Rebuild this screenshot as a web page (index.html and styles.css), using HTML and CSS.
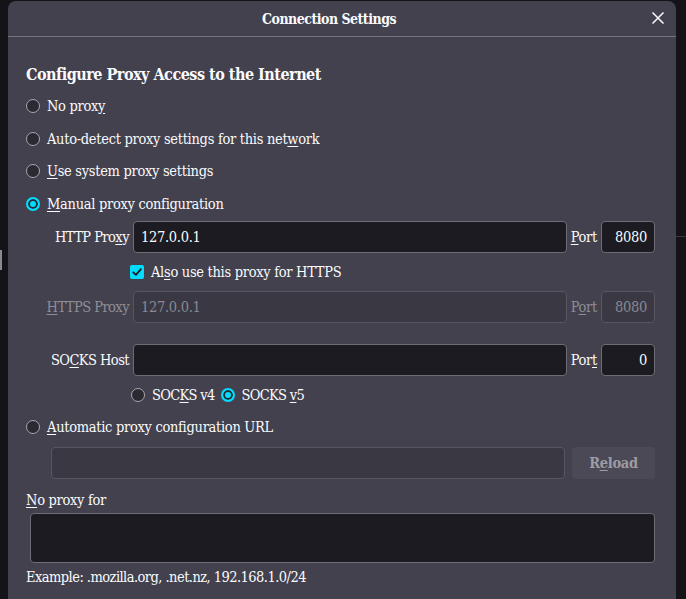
FILE: index.html
```html
<!DOCTYPE html>
<html lang="en">
<head>
<meta charset="utf-8">
<title>Connection Settings</title>
<link rel="stylesheet" href="styles.css">
</head>
<body>
<div class="page">
  <div class="page-line"></div>
  <div class="page-mark"></div>
</div>
<div class="dialog">
  <div class="titlebar">
    <span class="title">Connection Settings</span>
    <button class="close" aria-label="Close">
      <svg width="14" height="14" viewBox="0 0 14 14"><path d="M1.5 1.5 L12.5 12.5 M12.5 1.5 L1.5 12.5" stroke="#fbfbfe" stroke-width="1.5" fill="none"/></svg>
    </button>
  </div>
  <div class="content">
    <h2 class="heading">Configure Proxy Access to the Internet</h2>
    <label class="opt"><span class="radio"></span><span>No prox<u>y</u></span></label>
    <label class="opt"><span class="radio"></span><span>Auto-detect proxy settings for this net<u>w</u>ork</span></label>
    <label class="opt"><span class="radio"></span><span><u>U</u>se system proxy settings</span></label>
    <label class="opt"><span class="radio on"></span><span><u>M</u>anual proxy configuration</span></label>

    <div class="prow first">
      <span class="plabel">HTTP Pro<u>x</u>y</span>
      <div class="field">127.0.0.1</div>
      <span class="portlabel"><u>P</u>ort</span>
      <div class="field port">8080</div>
    </div>
    <label class="check-row"><span class="checkbox"><svg width="14" height="14" viewBox="0 0 14 14"><path d="M3.3 7.3 L5.9 9.9 L10.9 4.2" stroke="#1c1b22" stroke-width="1.8" fill="none" stroke-linecap="round" stroke-linejoin="round"/></svg></span><span>Al<u>s</u>o use this proxy for HTTPS</span></label>
    <div class="prow dis">
      <span class="plabel"><u>H</u>TTPS Proxy</span>
      <div class="field off">127.0.0.1</div>
      <span class="portlabel">P<u>o</u>rt</span>
      <div class="field port off">8080</div>
    </div>
    <div class="prow socks">
      <span class="plabel">SO<u>C</u>KS Host</span>
      <div class="field"></div>
      <span class="portlabel">Por<u>t</u></span>
      <div class="field port">0</div>
    </div>
    <div class="ver-row">
      <label class="mini"><span class="radio"></span><span>SOC<u>K</u>S v4</span></label>
      <label class="mini"><span class="radio on"></span><span>SOCKS <u>v</u>5</span></label>
    </div>
    <label class="opt auto"><span class="radio"></span><span><u>A</u>utomatic proxy configuration URL</span></label>
    <div class="url-row">
      <div class="field off url"></div>
      <button class="reload">R<u>e</u>load</button>
    </div>
    <div class="noproxy"><u>N</u>o proxy for</div>
    <div class="textarea"></div>
    <div class="example">Example: .mozilla.org, .net.nz, 192.168.1.0/24</div>
  </div>
</div>
</body>
</html>
```

FILE: styles.css
```css
* { box-sizing: border-box; }
html, body { margin: 0; padding: 0; }
body {
  width: 686px;
  height: 599px;
  overflow: hidden;
  background: #141318;
  font-family: "DejaVu Serif Condensed", "DejaVu Serif", "Liberation Serif", serif;
  font-stretch: condensed;
  color: #fbfbfe;
  font-size: 14.5px;
  letter-spacing: -0.3px;
  position: relative;
}
u { text-decoration: underline; text-underline-offset: 2px; }

.page { position: absolute; inset: 0; }
.page-line { position: absolute; left: 676px; top: 236px; width: 10px; height: 1px; background: #3a3940; }
.page-mark { position: absolute; left: 0; top: 250px; width: 2px; height: 20px; background: #8a8990; }

.dialog {
  position: absolute;
  left: 8px;
  top: 1px;
  width: 668px;
  height: 620px;
  background: #42414d;
  border-radius: 8px;
}
.titlebar {
  height: 36px;
  border-bottom: 1px solid #75747d;
  display: flex;
  align-items: center;
  justify-content: center;
  position: relative;
  padding-right: 26px;
}
.title { font-weight: bold; font-size: 14px; letter-spacing: -0.5px; }
.close {
  position: absolute;
  right: 11px;
  top: 10px;
  width: 14px;
  height: 14px;
  padding: 0;
  border: 0;
  background: none;
  display: flex;
}

.content { padding: 0 21px 0 18px; }
.heading {
  margin: 26px 0 0;
  font-size: 16px;
  letter-spacing: -0.5px;
  font-weight: bold;
  line-height: 24px;
  height: 24px;
}
.opt {
  display: flex;
  align-items: center;
  height: 32.67px;
  gap: 7px;
}
.opt:first-of-type { margin-top: 2.67px; }
.radio {
  width: 14px;
  height: 14px;
  border-radius: 50%;
  border: 1.5px solid #a9a8b1;
  background: #2b2a33;
  flex: none;
}
.radio.on {
  border: 2px solid #00ddff;
  background: #00ddff;
  box-shadow: inset 0 0 0 2px #2b2a33;
}

.prow {
  display: grid;
  grid-template-columns: 103px 1fr auto 54px;
  column-gap: 4px;
  align-items: center;
  height: 32px;
}
.prow.first { margin-top: 0.67px; }
.prow.dis { margin-top: 4px; color: #8f8e97; }
.prow.socks { margin-top: 21px; }
.plabel { text-align: right; letter-spacing: -0.55px; }
.field {
  height: 32px;
  background: #1c1b22;
  border: 1px solid #6e6d77;
  border-radius: 4px;
  padding: 0 7px;
  display: flex;
  align-items: center;
  color: #fbfbfe;
}
.field.port { justify-content: flex-end; }
.field.off {
  background: #3a3943;
  border-color: #57565f;
  color: #8a8993;
}

.check-row {
  display: flex;
  align-items: center;
  gap: 7px;
  height: 30px;
  margin-top: 4px;
  padding-left: 104px;
}
.checkbox {
  width: 14px;
  height: 14px;
  border-radius: 2px;
  background: #00ddff;
  display: flex;
  flex: none;
}

.ver-row {
  display: flex;
  align-items: center;
  height: 24px;
  margin-top: 7px;
  padding-left: 105px;
  gap: 6px;
  letter-spacing: -0.7px;
}
.mini { display: flex; align-items: center; gap: 7px; }

.opt.auto { height: 24px; margin-top: 8px; }
.url-row {
  display: flex;
  gap: 7px;
  margin-top: 8px;
  padding-left: 25px;
  height: 32px;
}
.field.url { flex: 1; }
.reload {
  width: 83px;
  height: 32px;
  border: 0;
  border-radius: 4px;
  background: #4a4955;
  color: #9d9ca5;
  font-family: inherit;
  font-stretch: condensed;
  font-size: 14.5px;
  letter-spacing: -0.3px;
  font-weight: bold;
}
.noproxy {
  margin-top: 9px;
  height: 24px;
  line-height: 24px;
}
.textarea {
  margin: 1px 0 0 4px;
  height: 50px;
  background: #1c1b22;
  border: 1px solid #6e6d77;
  border-radius: 4px;
}
.example {
  margin-top: 2px;
  height: 24px;
  line-height: 24px;
  letter-spacing: -0.55px;
}
```
